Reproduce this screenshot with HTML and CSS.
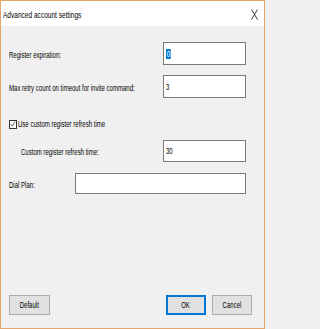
FILE: index.html
```html
<!DOCTYPE html>
<html>
<head>
<meta charset="utf-8">
<link rel="stylesheet" href="styles.css">
</head>
<body>
<div class="window">
  <div class="titlebar">
    <span class="title"><span class="sx">Advanced account settings</span></span>
    <svg class="close" width="7" height="11" viewBox="0 0 7 11"><path d="M0.5 0.5 L6.5 10.5 M6.5 0.5 L0.5 10.5" stroke="#222" stroke-width="0.9" fill="none"/></svg>
  </div>
  <div class="content">
    <div class="row r1">
      <span class="label"><span class="sx">Register expiration:</span></span>
      <div class="field f23"><span class="sx sel">0</span></div>
    </div>
    <div class="row r2">
      <span class="label"><span class="sx">Max retry count on timeout for invite command:</span></span>
      <div class="field f23"><span class="sx">3</span></div>
    </div>
    <div class="check">
      <span class="box"><svg width="8" height="8" viewBox="0 0 8 8"><path d="M1 4 L3 6.8 L7 0.8" stroke="#222" stroke-width="0.9" fill="none"/></svg></span>
      <span class="sx">Use custom register refresh time</span>
    </div>
    <div class="row r3">
      <span class="label indent"><span class="sx">Custom register refresh time:</span></span>
      <div class="field f22"><span class="sx">30</span></div>
    </div>
    <div class="row r4">
      <span class="label narrow"><span class="sx">Dial Plan:</span></span>
      <div class="field wide"></div>
    </div>
    <div class="spacer"></div>
    <div class="buttons">
      <div class="btn"><span class="sx c">Default</span></div>
      <div class="grow"></div>
      <div class="btn primary"><span class="sx c">OK</span></div>
      <div class="btn"><span class="sx c">Cancel</span></div>
    </div>
  </div>
</div>
</body>
</html>
```

FILE: styles.css
```css
* { box-sizing: border-box; }
html, body { margin: 0; padding: 0; }
body {
  font-family: "Liberation Sans", Arial, sans-serif;
  font-size: 9px;
  color: #000;
  background: #f0f0f0;
}
.window {
  width: 265px;
  height: 329px;
  border: 1px solid #e2a56e;
  background: #f0f0f0;
  display: flex;
  flex-direction: column;
}
.titlebar {
  height: 25px;
  background: #fff;
  display: flex;
  align-items: center;
  padding: 0 6px 0 2px;
  flex: none;
}
.title {
  flex: 1 1 0;
  min-width: 0;
  white-space: nowrap;
  font-size: 9.5px;
  padding-top: 1px;
}
.title .sx { transform: scaleX(0.69); }
.close { display: block; flex: none; margin-top: 1px; }
.sx {
  display: inline-block;
  white-space: nowrap;
  transform: scaleX(0.67);
  transform-origin: left center;
}
.sx.c { transform-origin: center center; }
.content {
  flex: 1;
  display: flex;
  flex-direction: column;
  padding: 16px 18px 13px 8px;
}
.row {
  display: flex;
  align-items: center;
}
.r2 { margin-top: 10px; }
.r3 { margin-top: 11px; }
.r4 { margin-top: 11px; }
.label {
  flex: 1 1 0;
  min-width: 0;
  white-space: nowrap;
  padding-top: 2px;
}
.label.indent { padding-left: 12px; }
.label.narrow { flex: none; width: 66px; }
.field {
  flex: none;
  width: 83px;
  background: #fff;
  border: 1px solid #7a7a7a;
  display: flex;
  align-items: center;
  padding-left: 2px;
}
.f23 { height: 23px; }
.f22 { height: 22px; }
.field.wide { flex: 1; width: auto; height: 21px; }
.sel {
  background: #0078d7;
  color: #fff;
  padding: 0 1px;
}
.check {
  display: flex;
  align-items: center;
  margin-top: 21px;
  height: 10px;
}
.box {
  width: 8px;
  height: 9px;
  border: 1px solid #333;
  background: #fff;
  display: flex;
  align-items: center;
  justify-content: center;
  margin-right: 1px;
  flex: none;
}
.box svg { display: block; }
.spacer { flex: 1; }
.buttons {
  display: flex;
  gap: 6px;
  margin-right: -6px;
}
.grow { flex: 1; }
.btn {
  width: 41px;
  height: 20px;
  background: #e1e1e1;
  border: 1px solid #adadad;
  display: flex;
  align-items: center;
  justify-content: center;
}
.btn.primary {
  width: 40px;
  border: 2px solid #0078d7;
}
.btn:last-child { width: 40px; }
```
